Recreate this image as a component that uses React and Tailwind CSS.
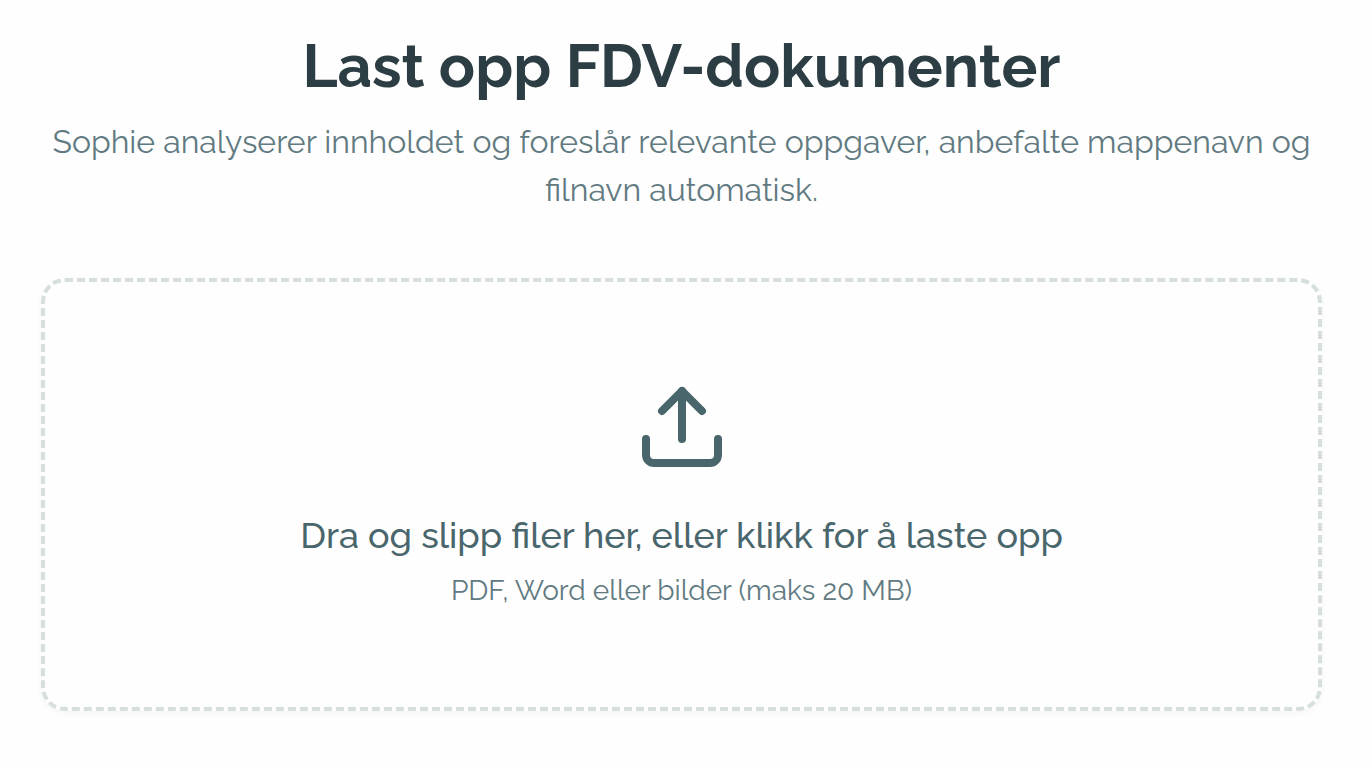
import React from "react";
import { Upload } from "lucide-react";

export default function App() {
  return (
    <main className="min-h-screen bg-[#fefefe] pl-[41px] pr-12 pt-8 pb-14 font-['Raleway','Lato',sans-serif]">
      {/* Heading */}
      <header className="text-center mb-16">
        <h1 className="text-[60px] leading-[68px] font-bold text-[#2c3e44]">
          Last opp FDV-dokumenter
        </h1>
        <p className="mt-[18px] text-[32px] leading-[48px] text-[#617a81]">
          Sophie analyserer innholdet og foreslår relevante oppgaver, anbefalte mappenavn og filnavn automatisk.
        </p>
      </header>

      {/* Drop zone */}
      <button
        type="button"
        className="w-full flex flex-col items-center rounded-3xl border-4 border-dashed border-[#d6dfdd] pt-[97px] pb-24 shadow-[0_2px_6px_rgba(0,0,0,0.04)] cursor-pointer"
      >
        <Upload className="size-24 text-[#4a666d]" strokeWidth={2} />
        <span className="mt-8 text-[36px] leading-[56px] font-medium text-[#4a666d]">
          Dra og slipp filer her, eller klikk for å laste opp
        </span>
        <span className="mt-2 text-[28px] leading-[40px] text-[#617a81]">
          PDF, Word eller bilder (maks 20 MB)
        </span>
      </button>
    </main>
  );
}
